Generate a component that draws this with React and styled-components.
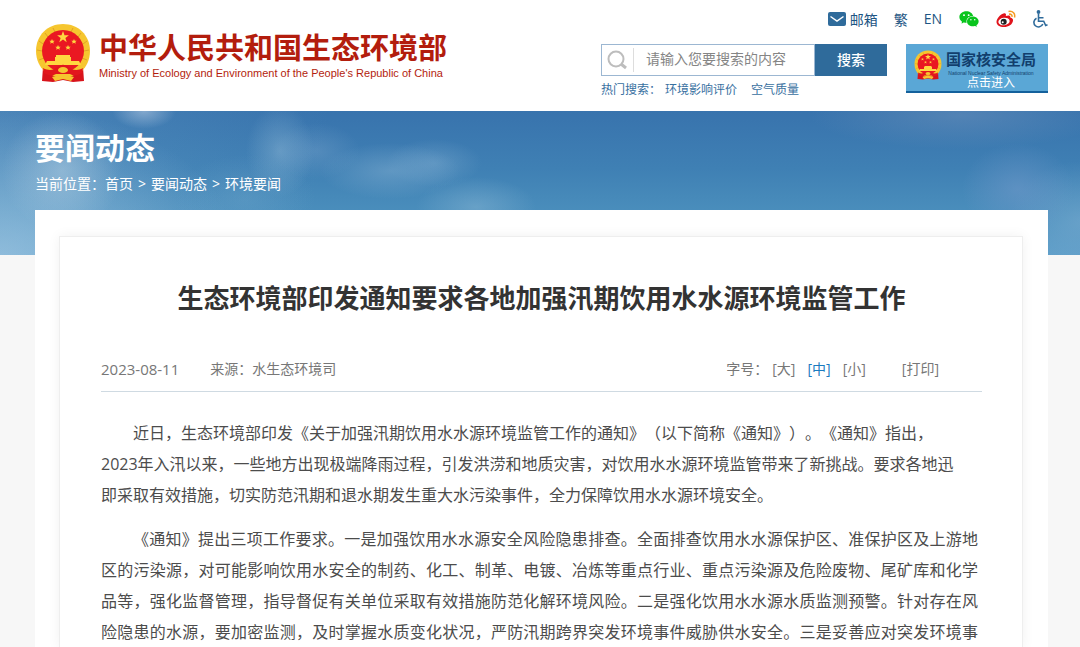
import React from "react";
import styled, { createGlobalStyle } from "styled-components";
import { AiFillWechat } from "react-icons/ai";

const GlobalStyle = createGlobalStyle`
  * {
    box-sizing: border-box;
  }

  body {
    margin: 0;
    font-family: "Open Sans", "Noto Sans CJK SC", sans-serif;
    font-size: 14px;
    color: #4c4c4c;
    text-spacing-trim: space-all;
  }

  a {
    color: inherit;
    text-decoration: none;
  }

  p, h1, h2 {
    margin: 0;
  }
`;

const Page = styled.div`
  display: flex;
  flex-direction: column;
  min-height: 100vh;
  background-color: #f7f7f7;
`;

const StyledHeader = styled.header`
  display: flex;
  align-items: flex-start;
  justify-content: space-between;
  height: 111px;
  padding: 0 32px 0 35px;
  background-color: #fff;
`;

const Brand = styled.a`
  display: flex;
  align-items: flex-start;
  gap: 8px;
  padding-top: 23px;
  color: #b31d0d;
`;

const BrandText = styled.div`
  display: flex;
  flex-direction: column;
  padding-top: 7px;
`;

const BrandName = styled.span`
  font-size: 29px;
  font-weight: 700;
  line-height: 36px;
  white-space: nowrap;
`;

const BrandSub = styled.span`
  font-family: "Liberation Sans", sans-serif;
  font-size: 11px;
  line-height: 14px;
  white-space: nowrap;
`;

const Tools = styled.div`
  display: flex;
  flex-direction: column;
  width: 447px;
  padding-top: 7px;
`;

const TopLinks = styled.nav`
  display: flex;
  align-items: center;
  justify-content: flex-end;
  gap: 16px;
  height: 23px;
  color: #1d5583;

  & a {
    display: flex;
    align-items: center;
    gap: 4px;
  }
`;

const ToolRow = styled.div`
  display: flex;
  align-items: flex-start;
  justify-content: space-between;
  margin-top: 14px;
`;

const SearchForm = styled.form`
  display: flex;
  width: 286px;
  height: 32px;
`;

const SearchBox = styled.label`
  display: flex;
  flex: 1;
  align-items: center;
  min-width: 0;
  padding-left: 5px;
  border: 1px solid #9cb7d2;
`;

const SearchInput = styled.input`
  flex: 1;
  min-width: 0;
  height: 24px;
  margin-left: 6px;
  padding: 0 0 3px 12px;
  border: 0;
  border-left: 1px solid #ddd;
  outline: none;
  font: inherit;

  &::placeholder {
    color: #858585;
  }
`;

const SearchButton = styled.button`
  width: 72px;
  padding: 0 0 2px;
  border: 0;
  background-color: #2f6b9b;
  color: #fff;
  font: inherit;
  font-weight: 500;
`;

const HotWords = styled.div`
  display: flex;
  margin-top: 5px;
  color: #38709f;
  font-size: 12px;
  line-height: 18px;

  & a {
    margin: 0 10px 0 4px;
  }
`;

const NuclearLink = styled.a`
  display: flex;
  justify-content: space-between;
  width: 142px;
  height: 49px;
  padding: 5px 12px 0 8px;
  border-bottom: 2px solid #14619c;
  background-color: #5aa7d6;

  & svg {
    flex-shrink: 0;
  }
`;

const NuclearText = styled.div`
  display: flex;
  flex-direction: column;
  align-items: center;
  color: #123f6d;
`;

const NuclearName = styled.span`
  font-size: 15px;
  font-weight: 700;
  line-height: 21px;
  white-space: nowrap;
`;

const NuclearSub = styled.span`
  font-family: "Liberation Sans", sans-serif;
  font-size: 5px;
  line-height: 6px;
  white-space: nowrap;
`;

const NuclearEnter = styled.span`
  color: #fff;
  font-size: 12px;
  line-height: 14px;
`;

const Banner = styled.section`
  height: 144px;
  padding: 17px 35px 0;
  color: #fff;
  background:
    radial-gradient(ellipse 32px 18px at 144px 0, #a5bfdbaa, transparent),
    radial-gradient(ellipse 60px 60px at 62px 60px, #b4cfe288, transparent),
    radial-gradient(ellipse 70px 44px at 245px 88px, #79aed044, transparent),
    radial-gradient(ellipse 34px 46px at 280px 40px, #8db7d577, transparent),
    radial-gradient(ellipse 44px 28px at 316px 40px, #81a9cf55, transparent),
    radial-gradient(ellipse 70px 28px at 390px 60px, #84b0d277, transparent),
    radial-gradient(ellipse 48px 24px at 434px 52px, #84b0d266, transparent),
    radial-gradient(ellipse 60px 30px at 476px 96px, #8ab8d577, transparent),
    radial-gradient(ellipse 150px 34px at 960px 4px, #6990bb88, transparent),
    radial-gradient(ellipse 56px 46px at 1018px 78px, #739acb88, transparent),
    radial-gradient(ellipse 70px 60px at 100% 110px, #7cadd188, transparent),
    radial-gradient(ellipse 240px 150px at 0 100%, #a5cae4aa, transparent),
    linear-gradient(100deg, #68a0c955, transparent 30%),
    linear-gradient(#3873ad, #3f80b4 40%, #4a8ebc 70%, #5c9dc8);

  & h2 {
    font-size: 30px;
    font-weight: 700;
    line-height: 40px;
  }
`;

const Breadcrumb = styled.nav`
  display: flex;
  gap: 5px;
  margin-top: 6px;
  line-height: 20px;
`;

const Main = styled.main`
  display: flex;
  flex: 1;
  flex-direction: column;
  margin: -45px 32px 0 35px;
  padding: 26px 25px 0 24px;
  background-color: #fff;
`;

const Article = styled.article`
  flex: 1;
  padding: 41px 40px 0 41px;
  border: 1px solid #eee;
  border-bottom: 0;
  box-shadow: 0 0 12px #0000000f;
`;

const Title = styled.h1`
  color: #333;
  font-size: 26px;
  font-weight: 700;
  line-height: 40px;
  text-align: center;
`;

const Meta = styled.div`
  display: flex;
  align-items: center;
  margin-top: 40px;
  padding-bottom: 11px;
  border-bottom: 1px solid #cfdae2;
  color: #777;
  line-height: 22px;

  & time {
    font-size: 15px;
  }
`;

const Source = styled.span`
  margin-left: 31px;
`;

const FontSizes = styled.div`
  display: flex;
  margin-left: auto;
  padding-right: 43px;
`;

const TextButton = styled.button`
  margin-left: ${(props) => props.$gap || 12}px;
  padding: 0;
  border: 0;
  background: none;
  color: ${(props) => (props.$active ? "#1b7bbf" : "inherit")};
  font: inherit;
  line-height: 22px;
`;

const Paragraph = styled.p`
  margin-top: 13px;
  padding-right: 4px;
  font-size: 16px;
  line-height: 31px;
  text-align: justify;
  text-align-last: ${(props) => (props.$fill ? "justify" : "auto")};
  text-indent: 2em;

  &:first-of-type {
    margin-top: 26px;
  }
`;

function Emblem({ width, height }) {
  return (
    <svg width={width} height={height} viewBox="0 0 56 60" aria-hidden="true">
      <path d="M8 44L7 58l11 1 10-2 10 2 11-1-1-14Z" fill="#d8131b" />
      <path
        d="M28 1C13 1 1 12 1 28c0 9 4 16 8 20l10 5h18l10-5c4-4 8-11 8-20C55 12 43 1 28 1Z"
        fill="#f6c62f"
      />
      <path
        d="M4 18l4 3M2 27l5 1M4 37l5-2M10 10l3 4M18 5l2 4M52 18l-4 3M54 27l-5 1M52 37l-5-2M46 10l-3 4M38 5l-2 4"
        stroke="#e0a324"
        strokeWidth="1"
      />
      <circle cx="28" cy="28" r="21" fill="#ea1822" />
      <path
        d="M28 8l1.500 4.200h4.400l-3.500 2.700 1.300 4.300L28 16.600l-3.700 2.600 1.300-4.300-3.500-2.700h4.400Z"
        fill="#ffd740"
      />
      <g fill="#ffd740">
        <path d="M17 16l.8 1.700h1.900l-1.400 1.200.5 1.900-1.800-1.100-1.800 1.100.5-1.900-1.400-1.200h1.900Z" />
        <path d="M39 16l.8 1.700h1.900l-1.400 1.200.5 1.900-1.800-1.100-1.800 1.100.5-1.900-1.400-1.200h1.900Z" />
        <path d="M23 22l.8 1.700h1.900l-1.400 1.200.5 1.900-1.800-1.100-1.800 1.100.5-1.900-1.400-1.200h1.900Z" />
        <path d="M33 22l.8 1.700h1.900l-1.400 1.200.5 1.900-1.800-1.100-1.800 1.100.5-1.900-1.400-1.200h1.900Z" />
        <path d="M21 32h14v2h1v4h8l2 4H10l2-4h8v-4h1Z" />
      </g>
      <path
        d="M8 45c7 4 12 1 14-1 4-3 8-3 12 0 2 2 7 5 14 1l-1 5c-5 3-9 3-12 1H21c-3 2-7 2-12-1Z"
        fill="#e2161d"
      />
      <ellipse cx="28" cy="47" rx="5" ry="3" fill="#f6c62f" />
      <path d="M17 54l11-3 11 3-3 4-8-2-8 2Z" fill="#f6c62f" />
    </svg>
  );
}

function MailIcon() {
  return (
    <svg width="18" height="14" viewBox="0 0 18 14" aria-hidden="true">
      <rect width="18" height="14" rx="2" fill="#2f6b9b" />
      <path
        d="M2.500 4.500L9 9l6.500-4.500"
        fill="none"
        stroke="#fff"
        strokeWidth="1.500"
      />
    </svg>
  );
}

function SearchIcon() {
  return (
    <svg width="20" height="20" viewBox="0 0 20 20" aria-hidden="true">
      <circle cx="9" cy="9" r="7.500" fill="none" stroke="#bdbdbd" strokeWidth="2" />
      <path d="M14 14l5 4" stroke="#bdbdbd" strokeWidth="3" />
    </svg>
  );
}

function WeiboIcon() {
  return (
    <svg width="20" height="18" viewBox="0 0 20 18" aria-hidden="true">
      <path
        d="M7.500 3.500C9.500 2.800 10.500 4 9.800 6c2.500-1 5-.7 4.500 1.500 2 .6 3 1.600 2.700 3.200-.5 3.800-4.500 6.300-9 6.300-4.300 0-7.500-2-7.500-5C.5 9 4 4.500 7.500 3.500Z"
        fill="#e0131b"
      />
      <ellipse
        cx="8"
        cy="11.500"
        rx="5.700"
        ry="3.700"
        fill="#fff"
        transform="rotate(-8 8 11.500)"
      />
      <circle cx="7.700" cy="11.700" r="3" fill="#222" />
      <circle cx="6.700" cy="12.300" r="1" fill="#fff" />
      <path
        d="M12.500 1.500c4.500-.8 7 2.200 6 6M13 4.200c2.200-.4 3.400 1 2.900 2.700"
        fill="none"
        stroke="#f59b22"
        strokeWidth="1.500"
      />
    </svg>
  );
}

function WheelchairIcon() {
  return (
    <svg width="16" height="18" viewBox="0 0 16 18" aria-hidden="true">
      <circle cx="6.500" cy="2" r="1.900" fill="#2f6b9b" />
      <path
        d="M6.500 4v7.200h5.200l2 4.300 1.800-.7M7 7.700h4.500M4.500 8.200a4.600 4.600 0 1 0 6.300 5.800"
        fill="none"
        stroke="#2f6b9b"
        strokeWidth="1.600"
      />
    </svg>
  );
}

const sizes = ["大", "中", "小"];

function Header() {
  return (
    <StyledHeader>
      <Brand href="#">
        <Emblem width={56} height={60} />
        <BrandText>
          <BrandName>中华人民共和国生态环境部</BrandName>
          <BrandSub>
            Ministry of Ecology and Environment of the People's Republic of China
          </BrandSub>
        </BrandText>
      </Brand>
      <Tools>
        <TopLinks>
          <a href="#mail">
            <MailIcon />
            邮箱
          </a>
          <a href="#traditional">繁</a>
          <a href="#en">EN</a>
          <a href="#wechat" aria-label="微信">
            <AiFillWechat size={22} color="#09c51d" />
          </a>
          <a href="#weibo" aria-label="微博">
            <WeiboIcon />
          </a>
          <a href="#accessible" aria-label="无障碍">
            <WheelchairIcon />
          </a>
        </TopLinks>
        <ToolRow>
          <div>
            <SearchForm>
              <SearchBox>
                <SearchIcon />
                <SearchInput
                  type="text"
                  aria-label="搜索"
                  placeholder="请输入您要搜索的内容"
                />
              </SearchBox>
              <SearchButton type="button">搜索</SearchButton>
            </SearchForm>
            <HotWords>
              <span>热门搜索：</span>
              <a href="#eia">环境影响评价</a>
              <a href="#air">空气质量</a>
            </HotWords>
          </div>
          <NuclearLink href="#nnsa">
            <Emblem width={28} height={32} />
            <NuclearText>
              <NuclearName>国家核安全局</NuclearName>
              <NuclearSub>National Nuclear Safety Administration</NuclearSub>
              <NuclearEnter>点击进入</NuclearEnter>
            </NuclearText>
          </NuclearLink>
        </ToolRow>
      </Tools>
    </StyledHeader>
  );
}

function App() {
  return (
    <Page>
      <GlobalStyle />
      <Header />
      <Banner>
        <h2>要闻动态</h2>
        <Breadcrumb>
          <span>
            当前位置：<a href="#home">首页</a>
          </span>
          <span>&gt;</span>
          <a href="#news">要闻动态</a>
          <span>&gt;</span>
          <a href="#env">环境要闻</a>
        </Breadcrumb>
      </Banner>
      <Main>
        <Article>
          <Title>生态环境部印发通知要求各地加强汛期饮用水水源环境监管工作</Title>
          <Meta>
            <time>2023-08-11</time>
            <Source>来源：水生态环境司</Source>
            <FontSizes>
              <span>字号：</span>
              {sizes.map((size, i) => (
                <TextButton
                  key={size}
                  type="button"
                  $active={size === "中"}
                  $gap={i === 0 ? 4 : 12}
                >
                  [{size}]
                </TextButton>
              ))}
              <TextButton type="button" $gap={36}>
                [打印]
              </TextButton>
            </FontSizes>
          </Meta>
          <Paragraph>
            近日，生态环境部印发《关于加强汛期饮用水水源环境监管工作的通知》（以下简称《通知》）。《通知》指出，
            <br />
            2023年入汛以来，一些地方出现极端降雨过程，引发洪涝和地质灾害，对饮用水水源环境监管带来了新挑战。要求各地迅
            <br />
            即采取有效措施，切实防范汛期和退水期发生重大水污染事件，全力保障饮用水水源环境安全。
          </Paragraph>
          <Paragraph $fill>
            《通知》提出三项工作要求。一是加强饮用水水源安全风险隐患排查。全面排查饮用水水源保护区、准保护区及上游地区的污染源，对可能影响饮用水安全的制药、化工、制革、电镀、冶炼等重点行业、重点污染源及危险废物、尾矿库和化学品等，强化监督管理，指导督促有关单位采取有效措施防范化解环境风险。二是强化饮用水水源水质监测预警。针对存在风险隐患的水源，要加密监测，及时掌握水质变化状况，严防汛期跨界突发环境事件威胁供水安全。三是妥善应对突发环境事
          </Paragraph>
        </Article>
      </Main>
    </Page>
  );
}

export default App;
